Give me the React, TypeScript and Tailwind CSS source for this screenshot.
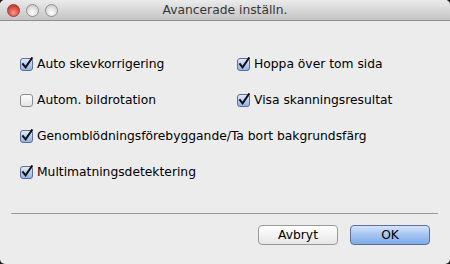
import React from "react";

const font = { fontFamily: '"Lucida Grande", "DejaVu Sans", sans-serif' };

function Check({ checked }: { checked: boolean }) {
  return (
    <svg width="14" height="14" viewBox="0 0 14 14" className="shrink-0">
      <defs>
        <linearGradient id={checked ? "cbOn" : "cbOff"} x1="0" y1="0" x2="0" y2="1">
          {checked ? (
            <>
              <stop offset="0" stopColor="#e4ecfb" />
              <stop offset="0.5" stopColor="#b9cdf1" />
              <stop offset="1" stopColor="#8fb0e6" />
            </>
          ) : (
            <>
              <stop offset="0" stopColor="#ffffff" />
              <stop offset="1" stopColor="#e2e2e2" />
            </>
          )}
        </linearGradient>
      </defs>
      <rect x="0.5" y="1.5" width="12" height="12" rx="2.5" fill={`url(#${checked ? "cbOn" : "cbOff"})`} stroke={checked ? "#5d6f95" : "#8c8c8c"} />
      {checked && (
        <path d="M3 7.2 L5.6 10.3 L11.8 1.2" fill="none" stroke="#111" strokeWidth="2" strokeLinecap="square" strokeLinejoin="miter" />
      )}
    </svg>
  );
}

function Item({ label, checked }: { label: string; checked: boolean }) {
  return (
    <div className="flex items-center gap-[3px] h-[36px]">
      <Check checked={checked} />
      <span className="text-[12.3px] text-black leading-none whitespace-nowrap">{label}</span>
    </div>
  );
}

export default function App() {
  return (
    <div className="w-[450px] h-[264px] bg-[#1e1e1e]" style={font}>
      <div className="w-full h-full flex flex-col rounded-[5px] overflow-hidden bg-[#ececec]">
        <div className="relative h-[21px] shrink-0 bg-gradient-to-b from-[#ebebeb] to-[#c4c4c4] border-b border-[#8e8e8e] flex items-center justify-center">
          <div className="absolute left-[7px] top-[4px] flex gap-[6px]">
            <span className="w-[13px] h-[13px] rounded-full border border-[#9b3a34] bg-[radial-gradient(circle_at_50%_70%,#f59a8e,#d6483e_60%,#b8322b)]" />
            <span className="w-[13px] h-[13px] rounded-full border border-[#8f8f8f] bg-[radial-gradient(circle_at_50%_70%,#ffffff,#dcdcdc_60%,#bdbdbd)]" />
            <span className="w-[13px] h-[13px] rounded-full border border-[#8f8f8f] bg-[radial-gradient(circle_at_50%_70%,#ffffff,#dcdcdc_60%,#bdbdbd)]" />
          </div>
          <span className="text-[12.3px] text-[#363636] leading-none">Avancerade inställn.</span>
        </div>
        <div className="flex flex-col pt-[25px] pl-[20px]">
          <div className="grid grid-cols-[217px_1fr]">
            <Item label="Auto skevkorrigering" checked />
            <Item label="Hoppa över tom sida" checked />
            <Item label="Autom. bildrotation" checked={false} />
            <Item label="Visa skanningsresultat" checked />
          </div>
          <Item label="Genomblödningsförebyggande/Ta bort bakgrundsfärg" checked />
          <Item label="Multimatningsdetektering" checked />
        </div>
        <div className="mx-[11px] mt-[23px] h-px bg-[#9a9a9a] mr-[12px]" />
        <div className="flex justify-end gap-[12px] pr-[20px] pt-[11px]">
          <button className="w-[80px] h-[20px] rounded-[4px] border border-[#9a9a9a] bg-gradient-to-b from-[#ffffff] to-[#e6e6e6] text-[12.3px] leading-none text-black">
            Avbryt
          </button>
          <button className="w-[80px] h-[20px] rounded-[4px] border border-[#5f6f98] bg-gradient-to-b from-[#d5e4fb] via-[#a5c4f2] to-[#7ea9ea] text-[12.3px] leading-none text-black">
            OK
          </button>
        </div>
      </div>
    </div>
  );
}
